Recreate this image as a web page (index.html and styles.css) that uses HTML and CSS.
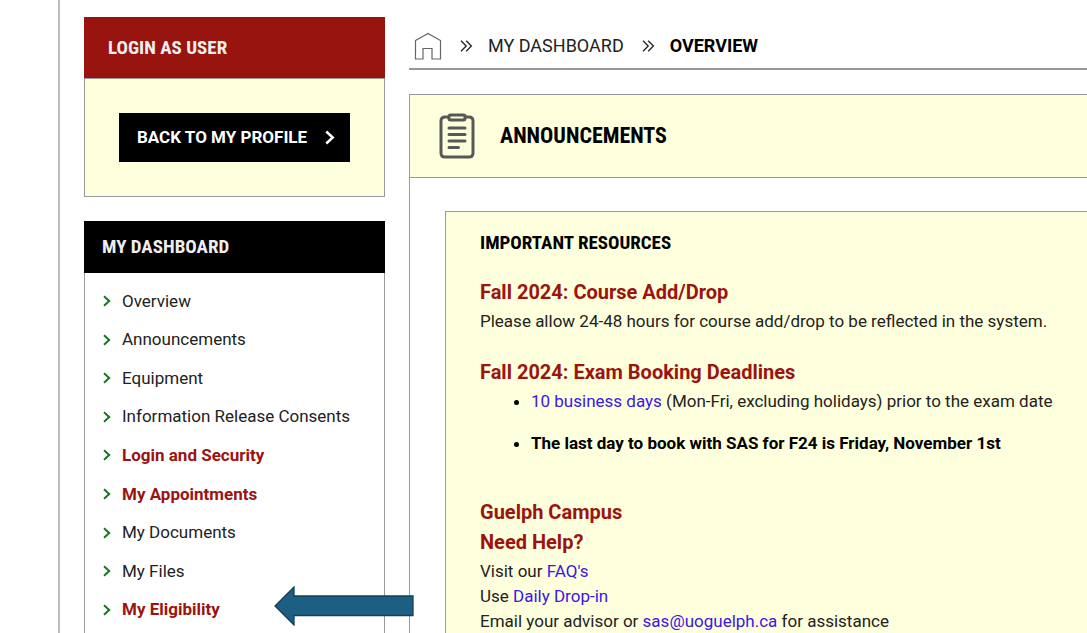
FILE: index.html
```
<!DOCTYPE html>
<html lang="en">
<head>
<meta charset="utf-8">
<title>My Dashboard - Overview</title>
<link rel="stylesheet" href="styles.css">
</head>
<body>
<svg class="defs" aria-hidden="true">
  <symbol id="chevron" viewBox="0 0 8 12"><path d="M1 1.2 6.2 6 1 10.8" fill="none" stroke="currentColor" stroke-width="2"/></symbol>
  <symbol id="double" viewBox="0 0 13 12"><path d="M1 .8 6.2 6 1 11.2M6.2 .8 11.4 6 6.2 11.2" fill="none" stroke="currentColor" stroke-width="1.3"/></symbol>
</svg>
<div class="page">
  <aside class="sidebar">
    <section class="panel">
      <h2 class="panel-title panel-title-red">LOGIN AS USER</h2>
      <div class="panel-body">
        <button class="profile-button" type="button">BACK TO MY PROFILE <svg class="button-chevron"><use href="#chevron"/></svg></button>
      </div>
    </section>
    <nav class="panel menu-panel">
      <h2 class="panel-title panel-title-black">MY DASHBOARD</h2>
      <ul class="menu">
        <li><a href="#"><svg class="chevron"><use href="#chevron"/></svg>Overview</a></li>
        <li><a href="#"><svg class="chevron"><use href="#chevron"/></svg>Announcements</a></li>
        <li><a href="#"><svg class="chevron"><use href="#chevron"/></svg>Equipment</a></li>
        <li><a href="#"><svg class="chevron"><use href="#chevron"/></svg>Information Release Consents</a></li>
        <li><a class="strong" href="#"><svg class="chevron"><use href="#chevron"/></svg>Login and Security</a></li>
        <li><a class="strong" href="#"><svg class="chevron"><use href="#chevron"/></svg>My Appointments</a></li>
        <li><a href="#"><svg class="chevron"><use href="#chevron"/></svg>My Documents</a></li>
        <li><a href="#"><svg class="chevron"><use href="#chevron"/></svg>My Files</a></li>
        <li class="pointed"><a class="strong" href="#"><svg class="chevron"><use href="#chevron"/></svg>My Eligibility</a>
          <svg class="arrow" viewBox="0 0 140 40" aria-hidden="true"><path d="M1 20 20 1V10H139V29.500H20V39Z" fill="#1d5f82" stroke="#153f56" stroke-width="1.300"/></svg>
        </li>
      </ul>
    </nav>
  </aside>
  <main class="main">
    <nav class="breadcrumb" aria-label="Breadcrumb">
      <a class="home" href="#" aria-label="Home"><svg class="home-icon" viewBox="0 0 28 28"><path d="M1.500 8.500 14 1.500 26.500 8.500V27H18V16.500H9V27H1.500Z" fill="none" stroke="#666" stroke-width="1.200"/></svg></a>
      <svg class="double"><use href="#double"/></svg>
      <a class="crumb" href="#">MY DASHBOARD</a>
      <svg class="double"><use href="#double"/></svg>
      <span class="crumb current">OVERVIEW</span>
    </nav>
    <section class="content">
      <header class="content-head">
        <svg class="clipboard" viewBox="0 0 36 46" aria-hidden="true"><g fill="none" stroke="#585858" stroke-width="3" stroke-linecap="round" stroke-linejoin="round"><path d="M9 4H6Q2 4 2 8V40Q2 44 6 44H30Q34 44 34 40V8Q34 4 30 4H27"/><rect x="10" y="2" width="16" height="5" rx="1.500"/><path d="M10 15H26M10 21.500H26M10 28H26M10 34.500H19.500"/></g></svg>
        <h1 class="content-title">ANNOUNCEMENTS</h1>
      </header>
      <article class="notice">
        <h2 class="notice-title">IMPORTANT RESOURCES</h2>
        <h3 class="topic">Fall 2024: Course Add/Drop</h3>
        <p class="text">Please allow 24-48 hours for course add/drop to be reflected in the system.</p>
        <h3 class="topic spaced">Fall 2024: Exam Booking Deadlines</h3>
        <ul class="bullets">
          <li><a href="#">10 business days</a> (Mon-Fri, excluding holidays) prior to the exam date</li>
          <li><strong>The last day to book with SAS for F24 is Friday, November 1st</strong></li>
        </ul>
        <h3 class="topic">Guelph Campus</h3>
        <h3 class="topic">Need Help?</h3>
        <p class="text">Visit our <a href="#">FAQ's</a></p>
        <p class="text">Use <a href="#">Daily Drop-in</a></p>
        <p class="text">Email your advisor or <a href="#">sas@uoguelph.ca</a> for assistance</p>
      </article>
    </section>
  </main>
</div>
</body>
</html>
```
FILE: styles.css
```
* { box-sizing: border-box; }
body {
  margin: 0;
  background: #fff;
  color: #222;
  font-family: Roboto, "Liberation Sans", sans-serif;
  font-size: 17px;
  line-height: 25px;
}
h1, h2, h3, p, ul { margin: 0; padding: 0; }
a { text-decoration: none; }
svg { flex: none; }
.defs { display: none; }
.page {
  display: flex;
  gap: 24px;
  min-height: 100vh;
  margin-left: 58px;
  padding: 17px 0 0 24px;
  border-left: 2px solid #bbb;
}
.sidebar {
  flex: none;
  width: 301px;
  display: flex;
  flex-direction: column;
  gap: 24px;
}
.panel { border: 1px solid #999; }
.panel-title {
  margin: -1px -1px 0;
  color: #eee;
  font-family: "Roboto Condensed", Roboto, sans-serif;
  font-size: 19px;
  font-weight: 700;
  line-height: 28px;
}
.panel-title-red { padding: 17px 24px 16px; background: #97140f; border-bottom: 1px solid #999; }
.panel-title-black { padding: 12px 18px; background: #000; }
.panel-body { padding: 34px; background: #feffdc; }
.profile-button {
  display: flex;
  align-items: center;
  gap: 18px;
  width: 100%;
  padding: 12px 14px 12px 18px;
  border: 0;
  background: #000;
  color: #fff;
  font-family: Roboto, sans-serif;
  font-size: 17px;
  font-weight: 700;
  line-height: 25px;
  white-space: nowrap;
}
.button-chevron { width: 10px; height: 15px; }
.menu-panel {
  flex: 1;
  display: flex;
  flex-direction: column;
  border-bottom: 0;
}
.menu {
  flex: 1;
  display: grid;
  grid-auto-rows: 1fr;
  padding: 9px 18px 5px;
  list-style: none;
}
.menu li { display: flex; align-items: center; }
.menu a { display: flex; align-items: center; gap: 11px; color: #222; }
.menu a.strong { color: #9b1410; font-weight: 700; }
.chevron { width: 8px; height: 12px; color: #17751f; }
.pointed { position: relative; }
.arrow { position: absolute; left: 171px; bottom: 3px; width: 140px; height: 40px; }
.main { flex: 1; min-width: 0; display: flex; flex-direction: column; }
.breadcrumb {
  display: flex;
  align-items: center;
  padding: 12px 5px 5px;
  border-bottom: 2px solid #999;
  line-height: 34px;
  font-size: 18px;
}
.home { display: flex; margin-right: 18px; }
.home-icon { width: 28px; height: 28px; }
.double { width: 13px; height: 12px; margin-right: 15px; color: #222; }
.crumb { margin-right: 18px; color: #222; }
.current { color: #000; font-weight: 700; }
.content {
  flex: 1;
  display: flex;
  flex-direction: column;
  margin-top: 24px;
  border: 1px solid #999;
  border-width: 1px 0 0 1px;
}
.content-head {
  display: flex;
  align-items: center;
  gap: 25px;
  padding: 18px 29px;
  background: #feffdc;
  border-bottom: 1px solid #999;
}
.clipboard { width: 36px; height: 46px; }
.content-title, .notice-title {
  color: #000;
  font-family: "Roboto Condensed", Roboto, sans-serif;
  font-weight: 700;
}
.content-title { font-size: 22px; line-height: 28px; }
.notice {
  flex: 1;
  margin: 33px 0 0 35px;
  padding: 18px 34px 0;
  border: 1px solid #999;
  border-width: 1px 0 0 1px;
  background: #feffdc;
}
.notice-title { margin-bottom: 21px; font-size: 19px; line-height: 26px; }
.topic { color: #9b1410; font-size: 20px; font-weight: 700; line-height: 30px; }
.spaced { margin-top: 23px; }
.topic + .text, .topic + .bullets { margin-top: 2px; }
.text a, .bullets a { color: #3a16e8; }
.bullets { padding-left: 51px; margin-bottom: 41px; }
.bullets li + li { margin-top: 17px; }
.bullets strong, .bullets li::marker { color: #000; }
```
